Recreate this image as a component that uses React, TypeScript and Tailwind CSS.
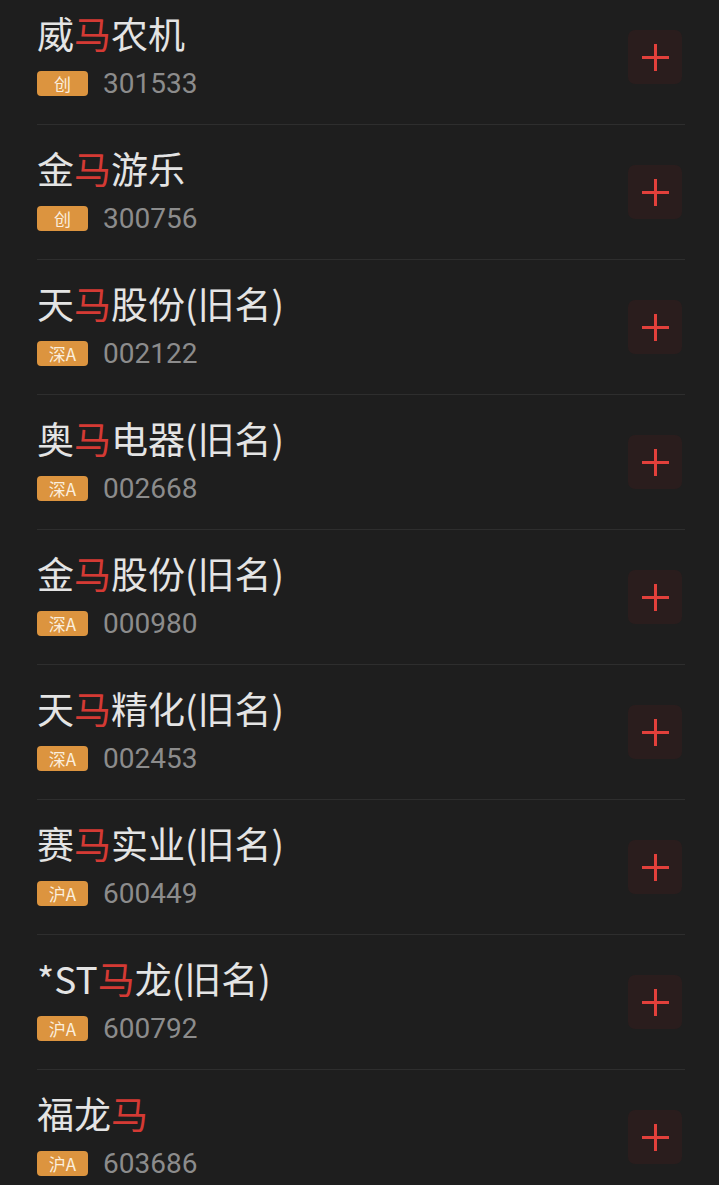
import React from 'react';

interface Stock {
    pre: string;
    post: string;
    board: string;
    code: string;
}

const stocks: Stock[] = [
    { pre: '威', post: '农机', board: '创', code: '301533' },
    { pre: '金', post: '游乐', board: '创', code: '300756' },
    { pre: '天', post: '股份(旧名)', board: '深A', code: '002122' },
    { pre: '奥', post: '电器(旧名)', board: '深A', code: '002668' },
    { pre: '金', post: '股份(旧名)', board: '深A', code: '000980' },
    { pre: '天', post: '精化(旧名)', board: '深A', code: '002453' },
    { pre: '赛', post: '实业(旧名)', board: '沪A', code: '600449' },
    { pre: '*ST', post: '龙(旧名)', board: '沪A', code: '600792' },
    { pre: '福龙', post: '', board: '沪A', code: '603686' },
];

function PlusButton() {
    return (
        <button className="w-[54px] h-[54px] rounded-[7px] bg-[#2a1d1d] flex items-center justify-center">
            <svg width="29" height="29" viewBox="0 0 29 29">
                <path d="M14.5 1v27M1 14.5h27" stroke="#e2403b" strokeWidth="3" />
            </svg>
        </button>
    );
}

export default function App() {
    return (
        <div className="h-[1185px] overflow-hidden bg-[#1e1e1e] font-['Noto_Sans_CJK_SC',sans-serif]">
            <div className="-mt-[10px] pl-[37px] pr-[34px]">
                {stocks.map((s) => (
                    <div key={s.code} className="h-[135px] border-b border-[#2e2e2e] flex items-center justify-between">
                        <div className="pb-[7px]">
                            <div className="h-[44px] leading-[44px] text-[37px] text-[#e4e4e4] whitespace-nowrap">
                                {s.pre}
                                <span className="text-[#d43a34]">马</span>
                                {s.post}
                            </div>
                            <div className="mt-[16px] h-[25px] flex items-center">
                                <span className="w-[51px] h-[25px] rounded-[4px] bg-[#dc943f] text-[#fbeedd] text-[17px] leading-[25px] text-center">
                                    {s.board}
                                </span>
                                <span className="ml-[15px] text-[28px] leading-[25px] text-[#8c8c8c] font-['Roboto',sans-serif]">
                                    {s.code}
                                </span>
                            </div>
                        </div>
                        <div className="pr-[3px]">
                            <PlusButton />
                        </div>
                    </div>
                ))}
            </div>
        </div>
    );
}
